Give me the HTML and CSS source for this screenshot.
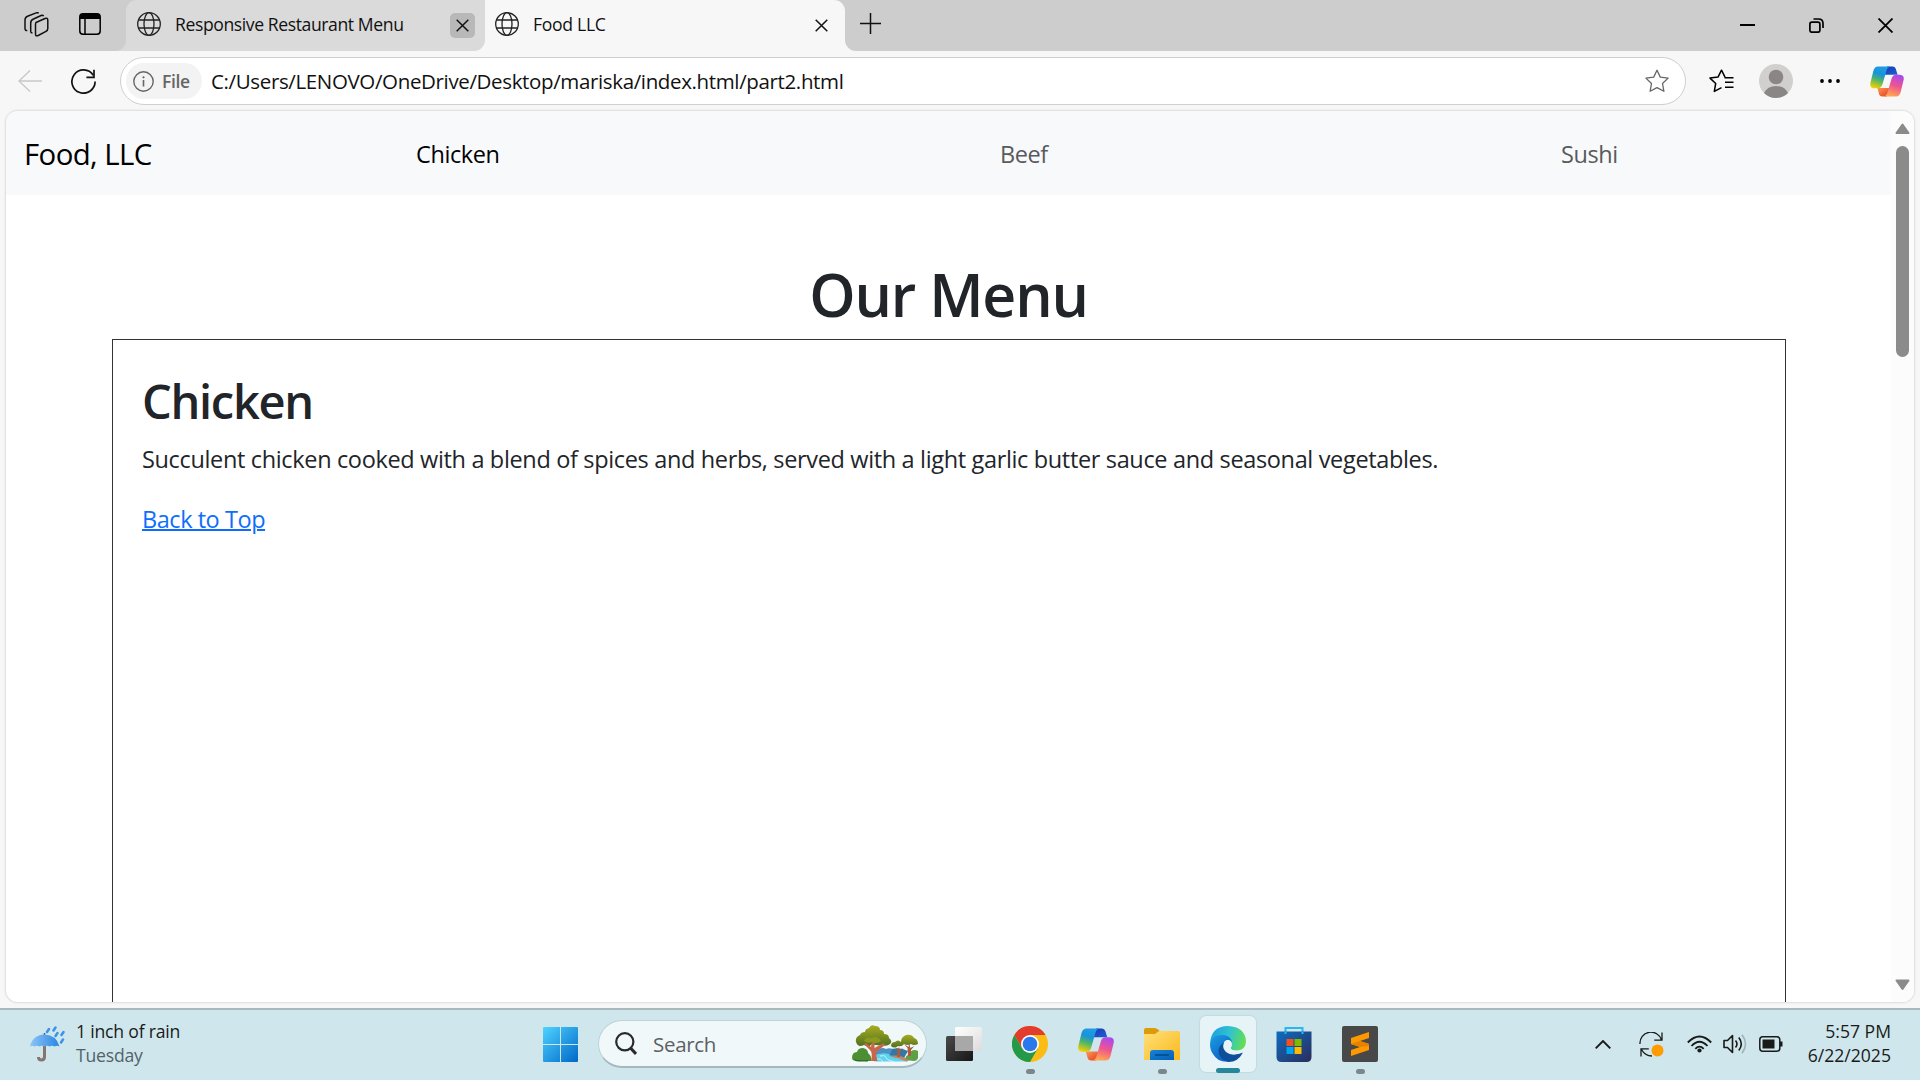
FILE: index.html
```html
<!DOCTYPE html>
<html lang="en">
<head>
<meta charset="utf-8">
<title>Food LLC</title>
<link rel="stylesheet" href="styles.css">
</head>
<body>
<svg width="0" height="0" class="defs">
  <defs>
    <linearGradient id="cpA" x1="0.6" y1="0" x2="0.3" y2="1"><stop offset="0" stop-color="#1f9be8"/><stop offset=".35" stop-color="#1a93d8"/><stop offset=".62" stop-color="#4db56a"/><stop offset="1" stop-color="#f5d000"/></linearGradient>
    <linearGradient id="cpB" x1="0.7" y1="0" x2="0.4" y2="1"><stop offset="0" stop-color="#a848f0"/><stop offset=".5" stop-color="#ee5590"/><stop offset="1" stop-color="#ffa84e"/></linearGradient>
    <linearGradient id="cpC" x1="0" y1="0" x2="1" y2="1"><stop offset="0" stop-color="#1838b0"/><stop offset="1" stop-color="#1f60d6"/></linearGradient>
    <linearGradient id="cpD" x1="0" y1="0" x2="1" y2="1"><stop offset="0" stop-color="#ff9a4a"/><stop offset="1" stop-color="#e03a2c"/></linearGradient>
    <linearGradient id="win" x1="0" y1="0" x2="1" y2="1"><stop offset="0" stop-color="#4fd3ff"/><stop offset="1" stop-color="#0067c8"/></linearGradient>
    <linearGradient id="dark" x1="0" y1="0" x2="1" y2="1"><stop offset="0" stop-color="#4a4a4a"/><stop offset="1" stop-color="#161616"/></linearGradient>
    <linearGradient id="light" x1="0" y1="0" x2="1" y2="1"><stop offset="0" stop-color="#fff"/><stop offset="1" stop-color="#dcdcdc"/></linearGradient>
    <linearGradient id="fold" x1="0" y1="0" x2="1" y2="1"><stop offset="0" stop-color="#ffe07a"/><stop offset="1" stop-color="#fbb91b"/></linearGradient>
    <linearGradient id="foldb" x1="0" y1="0" x2="1" y2="1"><stop offset="0" stop-color="#1683da"/><stop offset="1" stop-color="#0460b4"/></linearGradient>
    <linearGradient id="edTop" x1="0" y1="0.4" x2="1" y2="0.6"><stop offset="0" stop-color="#1f9fe0"/><stop offset=".5" stop-color="#2fc3d0"/><stop offset="1" stop-color="#66e04c"/></linearGradient>
    <linearGradient id="edMid" x1="0" y1="0" x2=".6" y2="1"><stop offset="0" stop-color="#1b9de2"/><stop offset="1" stop-color="#0a62c4"/></linearGradient>
    <linearGradient id="store" x1="0" y1="0" x2="1" y2="1"><stop offset="0" stop-color="#0f6cc0"/><stop offset="1" stop-color="#2a2c5c"/></linearGradient>
    <linearGradient id="umb" x1="0" y1="0" x2="1" y2="0"><stop offset="0" stop-color="#8cc4f8"/><stop offset="1" stop-color="#2a86e2"/></linearGradient>
    <linearGradient id="leaf" x1="0" y1="0" x2="0" y2="1"><stop offset="0" stop-color="#a9ad20"/><stop offset="1" stop-color="#4f7020"/></linearGradient>
    <symbol id="globe" viewBox="0 0 24 24"><g fill="none" stroke="#222" stroke-width="1.3"><circle cx="12" cy="12" r="11.3"/><ellipse cx="12" cy="12" rx="5" ry="11.3"/><path d="M1.8 8H22.200M1.800 16H22.200"/></g></symbol>
    <symbol id="cross" viewBox="0 0 13 13"><path d="M.7.7l11.600 11.600M12.300.7L.7 12.300" stroke="#111" stroke-width="1.500" fill="none"/></symbol>
    <symbol id="copilot" viewBox="0 0 36 33">
      <path d="M18 .5h6q2.500 0 3.300 2.500l2 6.300H15z" fill="url(#cpC)"/>
      <path d="M18 32.500h-5q-2.700 0-3.400-2.500l-1.800-6.500H21z" fill="url(#cpD)"/>
      <path d="M8.500.5H21q-2.500.8-3.300 3.500l-4.500 15.500q-1.300 4.300-4.700 4.300H5q-6 0-4.600-6L3.500 5Q4.700.5 8.500.5z" fill="url(#cpA)"/>
      <path d="M27.500 32.500H15q2.500-.8 3.300-3.500l4.500-15.500q1.300-4.200 4.700-4.200H31q6 0 4.600 6L32.500 28q-1.200 4.500-5 4.500z" fill="url(#cpB)"/>
    </symbol>
  </defs>
</svg>

<div class="window">
  <header class="tabstrip">
    <div class="tab-tools">
      <svg width="25" height="25" viewBox="0 0 25 25" fill="none" stroke="#111" stroke-width="1.500" stroke-linejoin="round"><path d="M12 10.500l9-4q2.800-1 2.800 1.700v8.300q0 2-1.800 2.800l-7.800 4.200q-2.700 1.200-2.700-1.500v-9q0-1.800.5-2.500z"/><path d="M19.500 4.200q-.4-1.300-2.400-.7L9.500 7Q6.700 8.200 6.700 11v8q0 2.200 1.800 1.800M14.500 1.300q-.6-1-2.300-.4L3.500 4.300Q1 5.300 1 8v8.500q0 2.300 2.300 2"/></svg>
      <svg width="22" height="22" viewBox="0 0 22 22"><rect x=".8" y=".8" width="20.400" height="20.400" rx="3.200" fill="none" stroke="#000" stroke-width="1.500"/><path d="M1 6V4q0-3 3-3h14q3 0 3 3v2z"/><path d="M6 6v15" stroke="#000" stroke-width="1.500"/></svg>
    </div>
    <div class="tab">
      <svg width="24" height="24"><use href="#globe"/></svg>
      <span class="tab-title tab-title-long">Responsive Restaurant Menu</span>
      <span class="tab-close hovered"><svg width="13" height="13"><use href="#cross"/></svg></span>
    </div>
    <div class="tab active">
      <svg width="24" height="24"><use href="#globe"/></svg>
      <span class="tab-title tab-title-short">Food LLC</span>
      <span class="tab-close"><svg width="13" height="13"><use href="#cross"/></svg></span>
    </div>
    <div class="tab-rest">
      <svg width="21" height="21" viewBox="0 0 21 21"><path d="M10.500 0v21M0 10.500h21" stroke="#111" stroke-width="1.500"/></svg>
      <div class="caption-buttons">
        <svg width="15" height="15" viewBox="0 0 15 15"><path d="M0 7h15" stroke="#000" stroke-width="2"/></svg>
        <svg width="15" height="15" viewBox="0 0 15 15" fill="none" stroke="#000" stroke-width="1.700"><rect x=".9" y="4.200" width="10" height="10" rx="2"/><path d="M4.500 1h5q4.500 0 4.500 4.500V10"/></svg>
        <svg width="15" height="15" viewBox="0 0 15 15"><path d="M.5.5l14 14M14.500.5l-14 14" stroke="#000" stroke-width="1.800"/></svg>
      </div>
    </div>
  </header>

  <div class="toolbar">
    <svg class="back" width="24" height="22" viewBox="0 0 24 22" fill="none" stroke="#c9c9c9" stroke-width="1.400"><path d="M24 11H.8M12 .5L1 11l11 10.500"/></svg>
    <svg class="reload" width="25" height="25" viewBox="0 0 25 25" fill="none" stroke="#111" stroke-width="1.700"><path d="M24.100 12.500A11.600 11.600 0 1 1 22.200 6.200"/><path d="M23 .8v7.500h-7.600"/></svg>
    <div class="address">
      <span class="scheme">
        <svg width="21" height="21" viewBox="0 0 21 21"><circle cx="10.500" cy="10.500" r="9.700" fill="none" stroke="#666" stroke-width="1.400"/><path d="M10.500 9v6.500" stroke="#666" stroke-width="1.600"/><circle cx="10.500" cy="6.300" r="1.100" fill="#666"/></svg>
        <span class="scheme-text">File</span>
      </span>
      <span class="url">C:/Users/LENOVO/OneDrive/Desktop/mariska/index.html/part2.html</span>
      <svg class="star" width="24" height="24" viewBox="0 0 24 24" fill="none" stroke="#666" stroke-width="1.300" stroke-linejoin="round"><path d="M12 1.200l3.300 6.900 7.800 1-5.600 5.400 1.400 7.800-6.900-3.700-6.900 3.700 1.400-7.800L.9 9.100l7.800-1z"/></svg>
    </div>
    <svg class="favorites" width="25" height="24" viewBox="0 0 25 24" fill="none" stroke="#000" stroke-width="1.500" stroke-linejoin="round"><path d="M16 8.200L12.500 1.200 9 8.100l-8 1 5.700 5.400-1.400 7.900 7.200-3.800M15.500 8.700h9M16 13.200h8.500M16 18.200h8.500"/></svg>
    <svg class="profile" width="34" height="34" viewBox="0 0 34 34"><circle cx="17" cy="17" r="17" fill="#d2d0ce"/><circle cx="17" cy="13" r="7.300" fill="#8a8685"/><path d="M5 29q3.500-7 12-7t12 7q-5 5-12 5T5 29z" fill="#8a8685"/></svg>
    <svg class="more" width="20" height="4" viewBox="0 0 20 4"><circle cx="2" cy="2" r="1.900"/><circle cx="10" cy="2" r="1.900"/><circle cx="18" cy="2" r="1.900"/></svg>
    <svg class="copilot-button" width="34" height="31"><use href="#copilot"/></svg>
  </div>

  <div class="page-frame">
    <main class="page">
      <nav class="navbar">
        <a class="brand">Food, LLC</a>
        <ul class="nav-links">
          <li class="current">Chicken</li>
          <li>Beef</li>
          <li>Sushi</li>
        </ul>
      </nav>
      <h1>Our Menu</h1>
      <section class="dish">
        <h2>Chicken</h2>
        <p>Succulent chicken cooked with a blend of spices and herbs, served with a light garlic butter sauce and seasonal vegetables.</p>
        <a class="to-top" href="#">Back to Top</a>
      </section>
    </main>
    <div class="scrollbar">
      <svg width="15" height="12" viewBox="0 0 15 12"><path d="M7.500 1.500L13.500 10h-12z" fill="#8b8b8b" stroke="#8b8b8b" stroke-width="2" stroke-linejoin="round"/></svg>
      <div class="thumb"></div>
      <svg width="15" height="12" viewBox="0 0 15 12"><path d="M7.500 10L13.500 1.500h-12z" fill="#8b8b8b" stroke="#8b8b8b" stroke-width="2" stroke-linejoin="round"/></svg>
    </div>
  </div>
</div>

<footer class="taskbar">
  <div class="weather">
    <svg width="36" height="36" viewBox="0 0 36 36">
      <path d="M14.500 18v12.500q0 3.500-3 3.500t-3-3" fill="none" stroke="#84766e" stroke-width="3"/>
      <path d="M14.500 7v3" stroke="#555" stroke-width="1.500"/>
      <path d="M0 20.500Q2.500 9 14.500 8.500 26.500 9 29.500 20.500q-2-1.500-5 0-2.500-1.500-5 0-2.500-1.500-5 0-2.500-1.500-5 0-2.500-1.500-5 0-2.500-1.500-4.500 0z" fill="url(#umb)"/>
      <path d="M17 6l2-3M23.500 4.500l2-3M25.500 10l2-3M31.500 9l2-3M31 16.500l2-3" stroke="#3b93ea" stroke-width="2.500" stroke-linecap="round"/>
    </svg>
    <div class="weather-text"><span class="w-main">1 inch of rain</span><span class="w-sub">Tuesday</span></div>
  </div>

  <div class="dock">
    <svg class="start" width="35" height="35" viewBox="0 0 35 35"><path d="M1 0h16v17H0V1q0-1 1-1zM18 0h16q1 0 1 1v16H18zM0 18h17v17H1q-1 0-1-1zM18 18h17v16q0 1-1 1H18z" fill="url(#win)"/></svg>
    <div class="search">
      <svg width="22" height="23" viewBox="0 0 22 23" fill="none" stroke="#2a2a2a"><circle cx="9.800" cy="9.800" r="8.600" stroke-width="2.200"/><path d="M15.500 16l5.500 6" stroke-width="3"/></svg>
      <span class="search-text">Search</span>
      <svg class="trees" width="66" height="37" viewBox="0 0 66 37">
        <path d="M24 27q5-6 10-3 5-2 12 2l6 7H22z" fill="#4b93c4"/>
        <path d="M40 24q8-2 16 2l-4 7-14-3z" fill="#3476a4"/>
        <path d="M0 33q0-6 5-6 1-4 6-4 5 1 5 5 4 3 3 8H5q-5 0-5-3z" fill="#4c8f32"/>
        <path d="M2 34q4 2 14 1v1.500H6q-3 0-4-2.500z" fill="#2f6a2a"/>
        <path d="M23 30q8-3 14-1 0 3 10 4 8 1 9 3.500H22z" fill="#5ed3ee"/>
        <path d="M28 31q6-1 6 1.500t8 4M25 34q4-1 6 2.500" stroke="#c8f3fa" stroke-width="1" fill="none"/>
        <path d="M38 31q10-2 20 4l-4 1.500q-6-3-16-5.500z" fill="#c98461"/>
        <path d="M54 34q-1-3 2-4 4-7 10-4v7q-1 3-4 3-5 0-8-2z" fill="#5da046"/>
        <path d="M4 17q-1-5 4-7 1-3 5-3 0-3 4-4 2-4 6-2 5 0 5 4 4 0 4 4 5 0 5 4 4 3 1 6-3 3-9 1-4 1-9-1-3 4-8 1-6 3-8-3z" fill="url(#leaf)"/>
        <path d="M39 21q0-4 4-4 3-3 6 0 0-5 5-7 6-1 8 3 4 1 4 6-4 2-7 0-3 2-7 0-2 3-6 2-4 3-7 0z" fill="url(#leaf)"/>
        <path d="M19 36q2-8-1-11l-6-6 2-1 5 4 1-6h2.500v7l9-5 1.500 2-8.500 7q-1 4 1 9z" fill="#c7664b"/>
        <path d="M45 32l.5-7-2.500-3 3 2 1-2 .5 3 3.500-2-3 4v5zM56 31l-.5-8-3.500-4 4.500 3 .8-4 1 5 4-2-3.300 4v6z" fill="#ad5b3f"/>
        <path d="M12 16q2-5 7-3 6-3 10 3-4 3.500-9 1-4 2-8-1z" fill="#8a9a1f"/>
      </svg>
    </div>
    <span class="app"><svg width="36" height="36" viewBox="0 0 36 36"><rect x="0" y="10" width="27" height="25" rx="1.500" fill="url(#dark)"/><rect x="9" y="1" width="27" height="24" rx="1.500" fill="url(#light)"/><path d="M9 10h18v15H10q-1 0-1-1z" fill="#a8a8a8"/></svg></span>
    <span class="app running"><svg width="36" height="36" viewBox="0 0 36 36"><circle cx="18" cy="18" r="18" fill="#fbbc14"/><path d="M2.400 9A18 18 0 0 1 33.600 9H18l-7.800 13.500z" fill="#e33b2e"/><path d="M2.400 9A18 18 0 0 0 18 36l7.800-13.500-15.600 0z" fill="#249a48"/><circle cx="18" cy="18" r="9" fill="#fff"/><circle cx="18" cy="18" r="7.300" fill="#2a78ec"/></svg></span>
    <span class="app"><svg width="36" height="33"><use href="#copilot"/></svg></span>
    <span class="app running"><svg width="36" height="36" viewBox="0 0 36 36"><path d="M0 12V4q0-2 2-2h9q1.500 0 3 1.500L17 6v6z" fill="#dd9a0a"/><path d="M0 8h11l4-3h19q2 0 2 2v27H0z" fill="url(#fold)"/><path d="M6 34v-7q0-3 3-3h18q3 0 3 3v7z" fill="url(#foldb)"/><path d="M11 29h14" stroke="#054f92" stroke-width="1.800"/></svg></span>
    <span class="app focused"><svg width="36" height="36" viewBox="0 0 36 36">
      <path d="M0 18Q1 0 18 0q17 1 18 15 0 9-9 9.500-6 0-6.500-2.500 2-2 1-5-1.500-4-6-4.500Q3 11 0 18z" fill="url(#edTop)"/>
      <path d="M0 18Q2 9 12 9q9 0 10 8-1-3-4-3-4 0-5 6-1 9 7 15.700Q8 37 3 28q-3-4-3-10z" fill="url(#edMid)"/>
      <path d="M13.500 16.500Q12 22 16 26q6 5 17 .5-5 9.500-14.500 9.500Q9 33 8.500 26q0-6 5-9.500z" fill="#0d4f9b"/>
      <path d="M14 17.500q.5-3.700 4-3.500 3.700.5 3.700 4.200 0 1.800-1.200 3.300-.5 1.500 2 2.500 4 1.500 10 .500.8 0 .5 1.800-6 3-12.500 1-6.500-3-6.500-9.800z" fill="#e6f3f7"/>
    </svg></span>
    <span class="app"><svg width="36" height="36" viewBox="0 0 36 36"><path d="M9.500 7V2h17v5" fill="none" stroke="#28b8f0" stroke-width="2"/><path d="M.5 5.500h35V31q0 5-5 5h-25q-5 0-5-5z" fill="url(#store)"/><path d="M9.500 5.500V8M26.500 5.500V8" stroke="#28b8f0" stroke-width="2"/><path d="M10.500 13h7v7h-7z" fill="#f25022"/><path d="M18.500 13h7v7h-7z" fill="#7fba00"/><path d="M10.500 21h7v7h-7z" fill="#00a4ef"/><path d="M18.500 21h7v7h-7z" fill="#ffb900"/></svg></span>
    <span class="app running"><svg width="36" height="36" viewBox="0 0 36 36"><rect width="36" height="36" rx="2" fill="#484848"/><path d="M9 12l18-6v6l-9 3 9 3v6L9 30v-6l9-3-9-3z" fill="#ff9800"/><path d="M9 18l9-3 9 3v2l-9 1z" fill="#e58200"/></svg></span>
  </div>

  <div class="tray">
    <svg class="chev" width="16" height="9" viewBox="0 0 16 9"><path d="M.7 8.300L8 1l7.300 7.300" fill="none" stroke="#1a1a1a" stroke-width="1.900"/></svg>
    <svg class="sync" width="25" height="25" viewBox="0 0 25 25" fill="none" stroke="#1a1a1a" stroke-width="1.300"><path d="M1 12A11 11 0 0 1 22.500 8M23 .5v7.700h-7.800M2 24.500v-7.700h7.800M2.500 17.500Q6 24 13 24"/><circle cx="18.500" cy="18.500" r="6" fill="#ff9a00" stroke="none"/></svg>
    <svg class="wifi" width="25" height="18" viewBox="0 0 25 18" fill="none" stroke="#1a1a1a" stroke-width="1.800"><path d="M.8 7.500Q12.500-4.500 24.200 7.500M4.500 11q8-8.500 16 0M8.300 13.800q4.200-4.300 8.400 0"/><circle cx="12.500" cy="15.500" r="2.100" fill="#1a1a1a" stroke="none"/></svg>
    <svg class="volume" width="25" height="20" viewBox="0 0 25 20" fill="none" stroke="#1a1a1a" stroke-width="1.600" stroke-linejoin="round"><path d="M1 6.500h3.500l5-5v17l-5-5H1z"/><path d="M12.500 6.500q3 3.500 0 7M15.800 3.500q5 6.500 0 13"/><path d="M19 .8q7 9.200 0 18.400" stroke="#9db4b9"/></svg>
    <svg class="battery" width="25" height="16" viewBox="0 0 25 16"><rect x=".8" y=".8" width="20" height="14.400" rx="3" fill="none" stroke="#1a1a1a" stroke-width="1.500"/><path d="M3.500 3.500h12v9h-12z" fill="#1a1a1a"/><path d="M21 5.500h2.500v5H21z" fill="#1a1a1a"/></svg>
    <div class="clock"><span class="time">5:57 PM</span><span class="date">6/22/2025</span></div>
  </div>
</footer>
</body>
</html>
```
FILE: styles.css
```css
* { box-sizing: border-box; }

body {
  margin: 0;
  width: 1920px;
  height: 1080px;
  overflow: hidden;
  display: flex;
  flex-direction: column;
  font-family: "Open Sans", "Noto Sans", sans-serif;
  background: #f7f7f7;
}

svg { display: block; flex: none; }
.defs { position: absolute; }
span, a, li { white-space: nowrap; }

.window {
  height: 1008px;
  display: flex;
  flex-direction: column;
}

/* Tab strip */
.tabstrip {
  display: flex;
  height: 51px;
  flex: none;
  background: linear-gradient(90deg, #dadada 0 126px, #cdcdcd 126px 470px, #f7f7f7 470px 800px, #cdcdcd 800px 845px, #f7f7f7 845px);
}

.tab-tools {
  width: 126px;
  display: flex;
  align-items: center;
  gap: 30px;
  padding: 0 0 3px 24px;
  background: #cdcdcd;
  border-bottom-right-radius: 11px;
}

.tab {
  width: 359px;
  display: flex;
  align-items: center;
  padding: 0 10px 3px 11px;
  background: #dadada;
  border-radius: 11px 0 11px 0;
  font-size: 17.600px;
}
.tab.active {
  width: 360px;
  padding: 0 11px 3px 10px;
  background: #f7f7f7;
  border-radius: 11px 11px 0 0;
}

.tab-title { margin-left: 14px; line-height: 24px; color: #111; }
.tab-title-long { letter-spacing: -0.41px; }
.tab-title-short { letter-spacing: -0.3px; }
.tab-close {
  margin-left: auto;
  width: 25px;
  height: 25px;
  display: grid;
  place-items: center;
  border-radius: 5px;
  margin-top: 2px;
}
.tab-close.hovered { background: #b8b8b8; }

.tab-rest {
  flex: 1;
  display: flex;
  align-items: center;
  justify-content: space-between;
  padding: 0 27px 4px 15px;
  background: #cdcdcd;
  border-bottom-left-radius: 11px;
}
.caption-buttons { display: flex; gap: 54px; padding-top: 4px; }

/* Toolbar */
.toolbar { height: 60px; flex: none; display: flex; align-items: center; }
.back { margin-left: 18px; }
.reload { margin-left: 29px; }
.address {
  margin-left: 24px;
  width: 1566px;
  height: 48px;
  display: flex;
  align-items: center;
  padding-left: 5px;
  background: #fff;
  border: 1px solid #cfcfcf;
  border-radius: 24px;
}
.scheme {
  width: 76px;
  height: 36px;
  display: flex;
  align-items: center;
  padding-left: 7px;
  gap: 8px;
  border-radius: 18px;
  background: #f3f3f3;
}
.scheme-text { font-size: 17.500px; font-weight: 600; color: #666; letter-spacing: -0.4px; }
.url { margin-left: 9px; font-size: 20.500px; letter-spacing: -0.36px; color: #111; }
.star { margin-left: auto; margin-right: 16px; }
.favorites { margin-left: 23px; }
.profile { margin-left: 25px; }
.more { margin-left: 27px; }
.copilot-button { margin-left: 30px; }

/* Rendered page */
.page-frame {
  margin: 0 6px;
  height: 891px;
  display: flex;
  overflow: hidden;
  background: #fff;
  border-radius: 12px;
  box-shadow: 0 0 2px 1px #dcdcdc;
}
.page { width: 1885px; height: 891px; overflow: hidden; color: #212529; }

.navbar {
  height: 84px;
  display: flex;
  align-items: center;
  padding: 2px 0 0 18px;
  background: #f8f9fb;
}
.brand { width: 392px; font-size: 29.400px; color: #000; letter-spacing: -0.6px; }
.nav-links {
  margin: 0;
  padding: 0;
  list-style: none;
  display: grid;
  grid-template-columns: 584px 561px auto;
  font-size: 23.500px;
  letter-spacing: -0.4px;
  color: #595a5b;
}
.nav-links .current { color: #000; }

h1 {
  margin: 63px 0 8px;
  text-align: center;
  font-size: 59px;
  line-height: 73px;
  font-weight: 600;
  letter-spacing: -1.2px;
}
.dish {
  margin: 0 105px 0 106px;
  height: 700px;
  padding: 32px 29px;
  border: 1px solid #333;
  font-size: 23.500px;
  line-height: 36px;
}
h2 { margin: 0 0 11px; font-size: 47px; line-height: 58px; font-weight: 600; letter-spacing: -1.3px; }
.dish p { margin: 0 0 24px; white-space: nowrap; letter-spacing: -0.345px; }
.to-top { color: #0d6efd; text-decoration-thickness: 2px; letter-spacing: -0.45px; }

.scrollbar {
  width: 23px;
  display: flex;
  flex-direction: column;
  align-items: center;
  padding: 12px 0 11px;
  background: #fcfcfc;
}
.thumb { width: 13px; height: 211px; margin: 11px 0 auto; border-radius: 7px; background: #8b8b8b; }

/* Taskbar */
.taskbar {
  height: 72px;
  display: flex;
  align-items: center;
  padding-bottom: 2px;
  border-top: 2px solid #a9babf;
  background: #cfe7ec;
}
.weather { width: 543px; display: flex; align-items: center; gap: 10px; padding-left: 30px; }
.weather-text, .clock {
  display: flex;
  flex-direction: column;
  padding-bottom: 2px;
  font-size: 17.600px;
  line-height: 24px;
  color: #1a1a1a;
}
.weather-text { letter-spacing: -0.2px; }
.w-sub { color: #53626a; }

.dock { width: 850px; display: flex; align-items: center; }
.search {
  margin-left: 20px;
  width: 329px;
  height: 48px;
  display: flex;
  align-items: center;
  padding: 0 8px 0 16px;
  border: 1.500px solid #bdd3d9;
  border-bottom: 2px solid #a4b8bf;
  border-radius: 24px;
  background: #f1f8fa;
}
.search-text { margin-left: 16px; font-size: 20.500px; letter-spacing: -0.3px; color: #5b6264; }
.trees { margin-left: auto; }

.app { width: 56px; height: 56px; margin-left: 10px; display: grid; place-items: center; position: relative; }
.search + .app { margin-left: 9px; }
.running::after, .focused::after {
  content: "";
  position: absolute;
  left: 24px;
  bottom: -2px;
  width: 9px;
  height: 5px;
  border-radius: 3px;
  background: #7b878b;
}
.focused { background: #e6f3f7; border-radius: 6px; box-shadow: 0 0 1px 1px #c3dae0; }
.focused::after { left: 16px; bottom: -1px; width: 24px; background: #27879a; }

.tray { flex: 1; display: flex; align-items: center; justify-content: flex-end; padding-right: 29px; }
.chev { margin-right: 28px; }
.sync { margin-right: 23px; }
.wifi { margin-right: 11px; }
.volume { margin-right: 11px; }
.clock { width: 107px; text-align: right; }
```
